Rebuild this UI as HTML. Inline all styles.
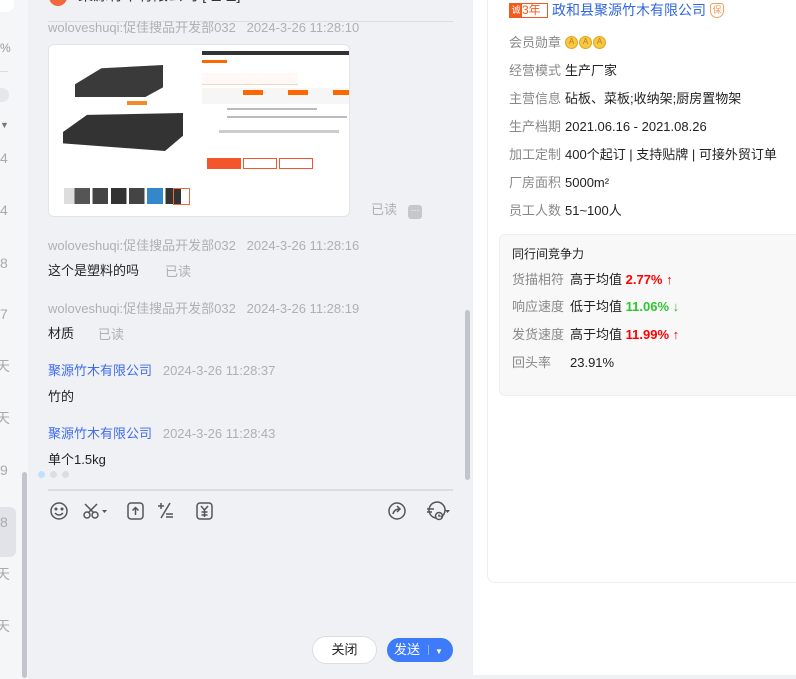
<!DOCTYPE html>
<html><head><meta charset="utf-8"><style>
*{margin:0;padding:0;box-sizing:border-box}
body{width:796px;height:679px;overflow:hidden;position:relative;background:#fff;font-family:"Liberation Sans","Noto Sans CJK SC",sans-serif;font-size:13px;color:#222}
.a{position:absolute;white-space:nowrap;line-height:16px}
.g{color:#b0b0b0}
.blue{color:#3d6cf0}
.lbl{color:#888}
.m{display:inline-block;width:13px;height:13px;border-radius:50%;background:#f6c945;border:1.5px solid #e2a41a;color:#c07a10;font-size:8px;line-height:10px;text-align:center;margin-right:1px;vertical-align:middle}
</style></head><body>
<!-- left strip -->
<div class="a" style="left:0;top:0;width:28px;height:679px;background:#f5f6f8"></div>
<div class="a" style="left:0;top:0;width:14px;height:12px;background:#fff;border-radius:0 0 8px 0"></div>
<div class="a" style="left:0;top:71px;width:8px;height:1px;background:#ddd"></div>
<div class="a" style="left:0;top:88px;width:9px;height:14px;background:#e6e7ea;border-radius:0 7px 7px 0"></div>
<div class="a" style="left:0;top:507px;width:16px;height:50px;background:#e1e3e8;border-radius:0 6px 6px 0"></div>
<div class="a" style="left:0;top:40px;font-size:12px;color:#999">%</div>
<div class="a" style="left:0;top:117px;font-size:9px;color:#777">▼</div>
<div class="a" style="left:0;top:150px;color:#aaa;font-size:14px">4</div>
<div class="a" style="left:0;top:202px;color:#aaa;font-size:14px">4</div>
<div class="a" style="left:0;top:255px;color:#aaa;font-size:14px">8</div>
<div class="a" style="left:0;top:306px;color:#aaa;font-size:14px">7</div>
<div class="a" style="left:-4px;top:358px;color:#aaa;font-size:14px">天</div>
<div class="a" style="left:-4px;top:410px;color:#aaa;font-size:14px">天</div>
<div class="a" style="left:0;top:462px;color:#aaa;font-size:14px">9</div>
<div class="a" style="left:0;top:514px;color:#aaa;font-size:14px">8</div>
<div class="a" style="left:-4px;top:566px;color:#aaa;font-size:14px">天</div>
<div class="a" style="left:-4px;top:618px;color:#aaa;font-size:14px">天</div>
<div class="a" style="left:22px;top:472px;width:5px;height:206px;background:#c2c5cb;border-radius:3px"></div>
<!-- chat area -->
<div class="a" style="left:28px;top:0;width:445px;height:679px;background:#f0f1f5"></div>
<div class="a" style="left:49px;top:-8px;width:18px;height:14px;background:#f26a3c;border-radius:0 0 9px 9px"></div>
<div class="a" style="left:78px;top:-12px;font-size:15px;color:#333">聚源竹木有限公司 [旺旺]</div>
<svg class="a" style="left:328px;top:-10px" width="128" height="14" viewBox="0 0 128 14" fill="none" stroke="#555" stroke-width="1.6"><circle cx="10" cy="0" r="8"/><path d="M36 7 l6-8 M44 2 h6 M47 -1 v6"/><path d="M64 -2 v7 h10 M74 2 h6 M77 -1 v6"/><path d="M106 4 h14"/></svg>
<div class="a" style="left:48px;top:21px;width:405px;height:1px;background:#dcdde1"></div>
<div class="a g" style="left:48px;top:20px">woloveshuqi:促佳搜品开发部032&nbsp;&nbsp;&nbsp;2024-3-26 11:28:10</div>
<!-- image bubble -->
<div class="a" style="left:48px;top:44px;width:302px;height:173px;background:#fff;border:1px solid #e3e4e8;border-radius:6px;overflow:hidden">
  <div class="a" style="left:26px;top:20px;width:88px;height:32px;background:#3a3a3a;clip-path:polygon(0 60%,30% 10%,100% 0,100% 70%,80% 100%,0 100%)"></div>
  <div class="a" style="left:78px;top:56px;width:20px;height:4px;background:#f08a2a"></div>
  <div class="a" style="left:14px;top:68px;width:120px;height:38px;background:#333;clip-path:polygon(0 50%,20% 5%,100% 0,100% 60%,85% 100%,0 80%)"></div>
  <div class="a" style="left:15px;top:143px;width:130px;height:16px;background:linear-gradient(90deg,#ddd 0 8%,#555 8% 20%,#fff 20% 22%,#444 22% 34%,#fff 34% 36%,#333 36% 48%,#fff 48% 50%,#444 50% 62%,#fff 62% 64%,#38c 64% 76%,#fff 76% 78%,#333 78% 90%,#fff 90%)"></div>
  <div class="a" style="left:124px;top:143px;width:17px;height:17px;border:1px solid #f26a3c"></div>
  <div class="a" style="left:153px;top:6px;width:148px;height:4px;background:#333"></div>
  <div class="a" style="left:153px;top:15px;width:25px;height:3px;background:#f60"></div>
  <div class="a" style="left:153px;top:28px;width:96px;height:12px;border-bottom:1px solid #f3d5cc;background:#fff8f6"></div>
  <div class="a" style="left:153px;top:43px;width:150px;height:16px;background:#f6f6f6"></div>
  <div class="a" style="left:194px;top:45px;width:20px;height:5px;background:#f60"></div>
  <div class="a" style="left:239px;top:45px;width:20px;height:5px;background:#f60"></div>
  <div class="a" style="left:284px;top:45px;width:18px;height:5px;background:#f60"></div>
  <div class="a" style="left:178px;top:63px;width:90px;height:2px;background:#bbb"></div>
  <div class="a" style="left:178px;top:71px;width:120px;height:2px;background:#bbb"></div>
  <div class="a" style="left:170px;top:85px;width:120px;height:3px;background:#ccc"></div>
  <div class="a" style="left:158px;top:113px;width:34px;height:11px;background:#f5552a"></div>
  <div class="a" style="left:194px;top:113px;width:34px;height:11px;border:1px solid #f5552a"></div>
  <div class="a" style="left:230px;top:113px;width:34px;height:11px;border:1px solid #f5552a"></div>
</div>
<div class="a g" style="left:371px;top:202px">已读</div>
<div class="a" style="left:408px;top:205px;width:14px;height:14px;background:#c5c7cd;border-radius:3px;color:#fff;font-size:9px;line-height:10px;text-align:center">···</div>

<div class="a g" style="left:48px;top:238px">woloveshuqi:促佳搜品开发部032&nbsp;&nbsp;&nbsp;2024-3-26 11:28:16</div>
<div class="a" style="left:48px;top:263px">这个是塑料的吗</div>
<div class="a g" style="left:165px;top:264px">已读</div>
<div class="a g" style="left:48px;top:301px">woloveshuqi:促佳搜品开发部032&nbsp;&nbsp;&nbsp;2024-3-26 11:28:19</div>
<div class="a" style="left:48px;top:326px">材质</div>
<div class="a g" style="left:98px;top:327px">已读</div>
<div class="a" style="left:48px;top:363px"><span class="blue">聚源竹木有限公司</span><span class="g">&nbsp;&nbsp;&nbsp;2024-3-26 11:28:37</span></div>
<div class="a" style="left:48px;top:389px">竹的</div>
<div class="a" style="left:48px;top:426px"><span class="blue">聚源竹木有限公司</span><span class="g">&nbsp;&nbsp;&nbsp;2024-3-26 11:28:43</span></div>
<div class="a" style="left:48px;top:452px">单个1.5kg</div>
<div class="a" style="left:38px;top:471px;width:7px;height:7px;border-radius:50%;background:#bfe0ff"></div>
<div class="a" style="left:50px;top:471px;width:7px;height:7px;border-radius:50%;background:#ddd"></div>
<div class="a" style="left:62px;top:471px;width:7px;height:7px;border-radius:50%;background:#ddd"></div>
<div class="a" style="left:465px;top:310px;width:5px;height:170px;background:#c2c5cb;border-radius:3px"></div>
<div class="a" style="left:48px;top:489px;width:405px;height:2px;background:#dcdde1"></div>
<!-- toolbar -->
<svg class="a" style="left:48px;top:500px" width="410" height="24" viewBox="0 0 410 24" fill="none" stroke="#555" stroke-width="1.5">
<circle cx="11" cy="11" r="8"/><circle cx="8" cy="9" r=".8" fill="#555"/><circle cx="14" cy="9" r=".8" fill="#555"/><path d="M7 13 q4 4 8 0"/>
<circle cx="39" cy="15" r="3"/><circle cx="47" cy="15" r="3"/><path d="M37 4 l9 9 M49 4 l-9 9"/><path d="M54 10 h5 l-2.5 3z" fill="#555" stroke="none"/>
<rect x="80" y="3" width="15" height="16" rx="3"/><path d="M87.5 15 v-7 M84.5 10.5 l3-3 3 3"/>
<path d="M110 6 h6 M113 3 v6 M122 3 l-9 15 M118 14 h7 M118 17 h7"/>
<rect x="149" y="3" width="15" height="16" rx="3"/><path d="M153 6 l3.5 4 3.5-4 M156.5 10 v7 M153.5 12 h6 M153.5 15 h6"/>
<circle cx="349" cy="11" r="8"/><path d="M345 14 q1-5 7-5 M349 6 l3 3 -3 3"/>
<path d="M388 18 a8 8 0 1 1 5 -1"/><path d="M379 9 h7 M379 12 h5"/><circle cx="391" cy="16" r="3.5"/><path d="M391 14.5 v1.5 h1.5"/><path d="M397 10 h5 l-2.5 3z" fill="#555" stroke="none"/>
</svg>
<!-- buttons -->
<div class="a" style="left:312px;top:636px;width:65px;height:28px;border-radius:14px;background:#fff;border:1px solid #dcdde1;text-align:center;line-height:26px;font-size:13px">关闭</div>
<div class="a" style="left:387px;top:638px;width:66px;height:24px;border-radius:12px;background:#3e7bfa;color:#fff;line-height:24px;font-size:13px;padding-left:7px">发送<span style="display:inline-block;width:1px;height:10px;background:#8fb2ff;margin:0 6px 0 8px;vertical-align:-1px"></span><span style="font-size:8px">▼</span></div>
<!-- right panel -->
<div class="a" style="left:473px;top:0;width:323px;height:676px;background:#fff"></div>
<div class="a" style="left:473px;top:675px;width:323px;height:4px;background:#f0f1f5"></div>
<div class="a" style="left:487px;top:-10px;width:320px;height:593px;border:1px solid #eceef2;border-radius:8px;background:#fff"></div>
<div class="a" style="left:509px;top:3px;width:39px;height:15px;border:1px solid #f25a1f;font-size:12px;line-height:13px;color:#f25a1f"><span style="display:inline-block;width:12px;height:13px;background:#f25a1f;color:#fff;font-size:9px;text-align:center;vertical-align:top">诚</span>3年</div>
<div class="a" style="left:552px;top:2px;font-size:14px;color:#3166e0">政和县聚源竹木有限公司</div>
<div class="a" style="left:710px;top:3px;width:14px;height:15px;border:1.5px solid #f0a060;border-radius:3px 3px 7px 7px;color:#f0a060;font-size:9px;text-align:center;line-height:12px">保</div>
<div class="a lbl" style="left:509px;top:35px">会员勋章</div>
<div class="a" style="left:565px;top:34px"><span class="m">A</span><span class="m">A</span><span class="m">A</span></div>
<div class="a lbl" style="left:509px;top:63px">经营模式</div><div class="a" style="left:565px;top:63px">生产厂家</div>
<div class="a lbl" style="left:509px;top:91px">主营信息</div><div class="a" style="left:565px;top:91px">砧板、菜板;收纳架;厨房置物架</div>
<div class="a lbl" style="left:509px;top:119px">生产档期</div><div class="a" style="left:565px;top:119px">2021.06.16 - 2021.08.26</div>
<div class="a lbl" style="left:509px;top:147px">加工定制</div><div class="a" style="left:565px;top:147px">400个起订 | 支持贴牌 | 可接外贸订单</div>
<div class="a lbl" style="left:509px;top:175px">厂房面积</div><div class="a" style="left:565px;top:175px">5000m²</div>
<div class="a lbl" style="left:509px;top:203px">员工人数</div><div class="a" style="left:565px;top:203px">51~100人</div>
<div class="a" style="left:499px;top:234px;width:310px;height:162px;background:#f8f8f9;border:1px solid #efeff2;border-radius:6px"></div>
<div class="a" style="left:512px;top:246px;font-size:12px">同行间竞争力</div>
<div class="a lbl" style="left:512px;top:272px">货描相符</div><div class="a" style="left:570px;top:272px">高于均值 <b style="color:#f00">2.77%</b> <span style="color:#f00">↑</span></div>
<div class="a lbl" style="left:512px;top:299px">响应速度</div><div class="a" style="left:570px;top:299px">低于均值 <b style="color:#2ec52e">11.06%</b> <span style="color:#2ec52e">↓</span></div>
<div class="a lbl" style="left:512px;top:327px">发货速度</div><div class="a" style="left:570px;top:327px">高于均值 <b style="color:#f00">11.99%</b> <span style="color:#f00">↑</span></div>
<div class="a lbl" style="left:512px;top:355px">回头率</div><div class="a" style="left:570px;top:355px">23.91%</div>
</body></html>
